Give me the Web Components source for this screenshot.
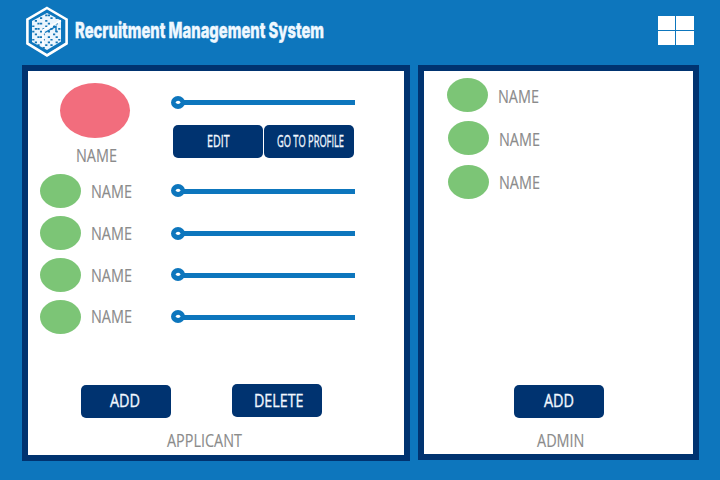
<!DOCTYPE html>
<html lang="en">
<head>
<meta charset="utf-8">
<title>Recruitment Management System</title>
<style>
body{margin:0;width:720px;height:480px;overflow:hidden;background:#0d76bd;font-family:"Open Sans","Noto Sans",sans-serif}
</style>
</head>
<body>
<rms-app></rms-app>
<script>
const define = (name, render, after) => customElements.define(name, class extends HTMLElement {
  connectedCallback() {
    if (this.shadowRoot) return;
    this.attachShadow({mode: 'open'}).innerHTML = render(k => this.getAttribute(k));
    if (after) after(this.shadowRoot);
  }
});

// A line of condensed text, fitted to a given width
define('rms-text', a => `
<style>:host{display:block;flex:none;width:${a('w')}px;height:${a('h')}px}svg{display:block;overflow:visible}
text{fill:var(--ink,#8b8b8b);font-size:${a('size') || 18}px;font-weight:var(--weight,400);font-family:var(--face,"Open Sans","Noto Sans",sans-serif);stroke:var(--edge,#8b8b8b);stroke-width:var(--edge-width,.15px)}</style>
<svg width="${a('w')}" height="${a('h')}"><text x="0" y="${a('base')}" textLength="${a('w')}" lengthAdjust="spacingAndGlyphs">${a('text')}</text></svg>`);

define('rms-logo', () => `
<style>:host{display:block;width:44px;height:52px}svg{display:block}</style>
<svg width="44" height="52" viewBox="0 0 44 52">
<path d="M22 2 41.6 13.4V37.4L22 49.4 2.4 37.4V13.4Z" fill="none" stroke="#fff" stroke-width="2.6"/>
<path d="M7 15 22 7 36 14.5V35.5L22 44 7 36Z" fill="#eaf5fd"/>
<g id="bits"></g>
<path d="M18 24 36 14.5M18 24V40" stroke="#fff" stroke-width="1.7" fill="none"/>
<path d="M20 26.5 31 20.5V26" stroke="#0d76bd" stroke-width="1.4" fill="none"/>
</svg>`, root => {
  const rows = [
    '.....xx....','...x...x.x.','.x...x.....','..xx..x..x.','x....x..x..',
    '.xx.x..x..x','x..x..x..x.','.x..x...x..','..xx..x..x.','x...x..x..x',
    '.x.x..x..x.','..x..x.x...','....x...x..'];
  let d = '';
  rows.forEach((r, y) => [...r].forEach((c, x) => { if (c === 'x') d += `M${7.2 + x * 2.6} ${8.6 + y * 2.7}h2.2v1.7h-2.2z`; }));
  root.getElementById('bits').innerHTML = `<path d="${d}" fill="#1476b6"/>`;
});

define('rms-windows', () => `
<style>:host{display:grid;width:36px;height:29px;grid-template-columns:16.5px 18px;grid-template-rows:14px 14px;gap:1px 1.5px}i{background:#fff}</style>
<i></i><i></i><i></i><i></i>`);

define('rms-header', () => `
<style>:host{display:flex;height:65px;box-sizing:border-box;padding:6px 26px 0 25px;justify-content:space-between}
.brand{display:flex;gap:6px}
rms-text{--ink:#eff8ff;--weight:800;--face:Inter,sans-serif;--edge:#eff8ff;--edge-width:.4px}
rms-windows{margin-top:10px}</style>
<div class="brand"><rms-logo></rms-logo><rms-text w="249" h="44" base="32" size="22" text="Recruitment Management System"></rms-text></div>
<rms-windows></rms-windows>`);

define('rms-avatar', a => `
<style>:host{display:block;flex:none;width:${a('w') || 41}px;height:${a('h') || 34}px;border-radius:50%;background:${a('color') || '#7cc576'}}</style>`);

define('rms-person', a => `
<style>:host{display:flex;gap:9.5px;height:34px}</style>
<rms-avatar></rms-avatar><rms-text w="41" h="34" base="${a('base')}" text="NAME"></rms-text>`);

define('rms-slider', a => `
<style>:host{display:block;height:13px}svg{display:block}</style>
<svg width="184" height="13"><rect x="10" y="${a('bar')}" width="174" height="5" fill="#0d76bd"/><ellipse cx="7" cy="6.5" rx="7" ry="6.5" fill="#0d76bd"/><ellipse cx="7.1" cy="6.3" rx="2.2" ry="1.6" fill="#fff"/></svg>`);

define('rms-button', a => `
<style>:host{display:block;flex:none;width:90px;height:33px;box-sizing:border-box;border-radius:5px;background:#003370;padding-left:${a('inset')}px;--ink:#f2f8ff;--edge:#f2f8ff;--edge-width:.35px}</style>
<rms-text w="${a('w')}" h="33" base="${a('base') || 22}" size="${a('size') || 18}" text="${a('text')}"></rms-text>`);

define('rms-panel', () => `
<style>:host{display:flex;flex-direction:column;box-sizing:border-box;border:6px solid #003370;background:#fff}
.body{flex:1}footer{height:71px}</style>
<div class="body"><slot></slot></div><footer><slot name="footer"></slot></footer>`);

define('rms-app', () => `
<style>
:host{display:block}
main{display:flex;gap:8px;padding-left:22px}
.applicant{width:388px;height:396px}
.admin{width:281px;height:395px}
.cols{display:flex}
.people{width:143px;box-sizing:border-box;padding:12px 0 0 12px}
.people>rms-person{margin-bottom:8px}
.lead{height:91px}
.lead rms-avatar{margin-left:20px}
.lead rms-text{margin:10px 0 0 35.5px}
.tracks{padding-top:25px;width:184px}
.pair{display:flex;gap:1px;margin:16px 0 26px 2px}
.actions{display:flex;align-items:flex-start;height:33px}
.applicant .actions{padding-left:53px;gap:61px}
.applicant .actions rms-button:first-child{margin-top:1px}
.admin .actions{padding-left:90px;padding-top:2px}
.list{padding:7px 0 0 24px}
.list rms-person:first-child{margin-left:-1px}
</style>
<rms-header></rms-header>
<main>
<rms-panel class="applicant">
  <div class="cols">
    <div class="people">
      <div class="lead"><rms-avatar w="70" h="55" color="#f26d7d"></rms-avatar><rms-text w="41" h="18" base="14" text="NAME"></rms-text></div>
      <rms-person base="24"></rms-person><rms-person base="24"></rms-person><rms-person base="24"></rms-person><rms-person base="23"></rms-person>
    </div>
    <div class="tracks">
      <rms-slider bar="4"></rms-slider>
      <div class="pair"><rms-button inset="33.5" w="22.5" size="16.5" text="EDIT"></rms-button><rms-button inset="13" w="67" size="16.5" text="GO TO PROFILE"></rms-button></div>
      <rms-slider bar="5"></rms-slider>
      <rms-slider bar="4" style="margin-top:30px"></rms-slider>
      <rms-slider bar="5" style="margin-top:28px"></rms-slider>
      <rms-slider bar="5" style="margin-top:29px"></rms-slider>
    </div>
  </div>
  <div slot="footer">
    <div class="actions"><rms-button inset="29" w="30" text="ADD"></rms-button><rms-button inset="21.5" w="49.5" base="23" text="DELETE"></rms-button></div>
    <rms-text style="margin:13px 0 0 139px" w="75" h="20" base="17" text="APPLICANT"></rms-text>
  </div>
</rms-panel>
<rms-panel class="admin">
  <div class="list">
    <rms-person base="25" style="margin-left:-1px"></rms-person>
    <rms-person base="25" style="margin-top:9px"></rms-person>
    <rms-person base="24" style="margin-top:10px"></rms-person>
  </div>
  <div slot="footer">
    <div class="actions"><rms-button inset="30" w="30" text="ADD"></rms-button></div>
    <rms-text style="margin:12px 0 0 112.5px" w="47.5" h="20" base="17" text="ADMIN"></rms-text>
  </div>
</rms-panel>
</main>`);
</script>
</body>
</html>
